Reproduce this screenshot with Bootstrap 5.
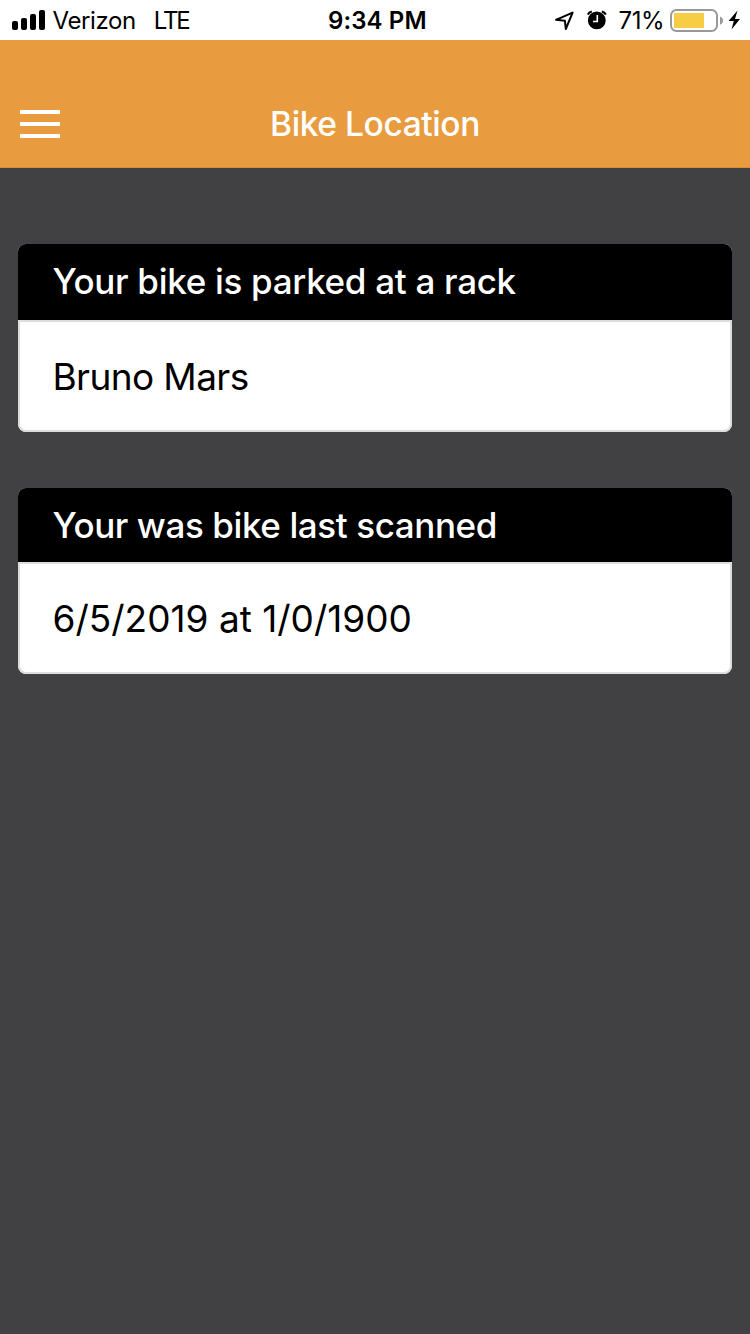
<!DOCTYPE html>
<html lang="en">
<head>
<meta charset="utf-8">
<meta name="viewport" content="width=device-width, initial-scale=1">
<title>Bike Location</title>
<link href="https://cdn.jsdelivr.net/npm/bootstrap@5.3.0/dist/css/bootstrap.min.css" rel="stylesheet">
<style>
  body { font-family: Inter, "Liberation Sans", sans-serif; background: #414042; border-bottom: 1px solid #493f48; }
  .status { height: 40px; font-size: 24px; line-height: 40px; }
  .status span { padding-top: 2px; }
  .status svg, .app-header svg { display: block; }
  .carrier { margin-left: 6.5px; letter-spacing: -.4px; }
  .network { margin-left: 18px; letter-spacing: -2.1px; }
  .clock { font-weight: 600; letter-spacing: .1px; left: 328px; top: -1px; }
  .percent { letter-spacing: -.5px; margin-right: 6px; }
  .app-header { height: 128px; background: #e99b40; border-bottom: 1px solid #d98d37; padding-top: 40px; }
  .app-title { font-size: 33.5px; font-weight: 450; line-height: 89px; letter-spacing: -.4px; }
  .menu-btn { left: 20px; top: 70px; }
  .bike-list { padding: 76px 18px 0; gap: 56px; }
  .bike-card { border: 0; border-radius: 8px; overflow: hidden; --bs-card-border-width: 0; }
  .bike-card .card-header { background: #000; color: #fff; font-size: 35px; font-weight: 450; padding: 0 34.5px; height: 76px; line-height: 75px; border-radius: 0; letter-spacing: -.3px; }
  .bike-card .card-body { color: #000; border: 2px solid #ddd; border-radius: 0 0 8px 8px; font-size: 37px; padding: 0 32.5px; height: 112px; line-height: 110px; letter-spacing: -.6px; }
  .scan .card-header { height: 74px; letter-spacing: -.4px; }
  .scan .card-body { letter-spacing: 0; }
</style>
<script src="https://cdn.jsdelivr.net/npm/bootstrap@5.3.0/dist/js/bootstrap.bundle.min.js"></script>
</head>
<body class="min-vh-100">
<div class="status bg-white text-black d-flex align-items-center position-relative">
  <svg width="46" height="40" viewBox="0 0 46 40"><rect x="12" y="21" width="6" height="9" rx="2"/><rect x="21" y="18" width="6" height="12" rx="2"/><rect x="30" y="14" width="6" height="16" rx="2"/><rect x="39" y="10" width="6" height="20" rx="2"/></svg>
  <span class="carrier">Verizon</span>
  <span class="network">LTE</span>
  <span class="clock position-absolute">9:34 PM</span>
  <div class="d-flex align-items-center ms-auto">
    <svg width="73" height="40" viewBox="0 0 73 40"><path d="M10 19.8 26.6 12.6 19.8 29 18.9 20.8Z" fill="none" stroke="#000" stroke-width="2" stroke-linejoin="round"/><circle cx="50.8" cy="20.4" r="8.9"/><path d="M41.8 14.6Q42.8 12 45.8 11.4M59.8 14.6Q58.8 12 55.8 11.4" stroke="#000" stroke-width="2" fill="none"/><path d="M51.3 15v6.5H47" stroke="#fff" stroke-width="1.6" fill="none"/></svg>
    <span class="percent">71%</span>
    <svg width="80" height="40" viewBox="0 0 80 40"><rect x="1" y="10" width="46" height="21" rx="5.5" fill="#fff" stroke="#999" stroke-width="2"/><rect x="4" y="13" width="30" height="15" fill="#f7cd46"/><path d="M50 16.5c4 1.2 4 7 0 8.2Z" fill="#999"/><path d="M67.5 10.5 58.5 21h5.3L61.5 29.5 70 19h-5Z"/></svg>
  </div>
</div>
<header class="app-header position-relative text-center text-white">
  <button class="menu-btn btn p-0 border-0 position-absolute" aria-label="Menu"><svg width="40" height="28" viewBox="0 0 40 28"><path d="M0 2h40M0 14h40M0 26h40" stroke="#fff" stroke-width="4"/></svg></button>
  <h1 class="app-title m-0">Bike Location</h1>
</header>
<main class="bike-list d-flex flex-column">
  <section class="bike-card card rack">
    <div class="card-header">Your bike is parked at a rack</div>
    <div class="card-body">Bruno Mars</div>
  </section>
  <section class="bike-card card scan">
    <div class="card-header">Your was bike last scanned</div>
    <div class="card-body">6/5/2019 at 1/0/1900</div>
  </section>
</main>
</body>
</html>
